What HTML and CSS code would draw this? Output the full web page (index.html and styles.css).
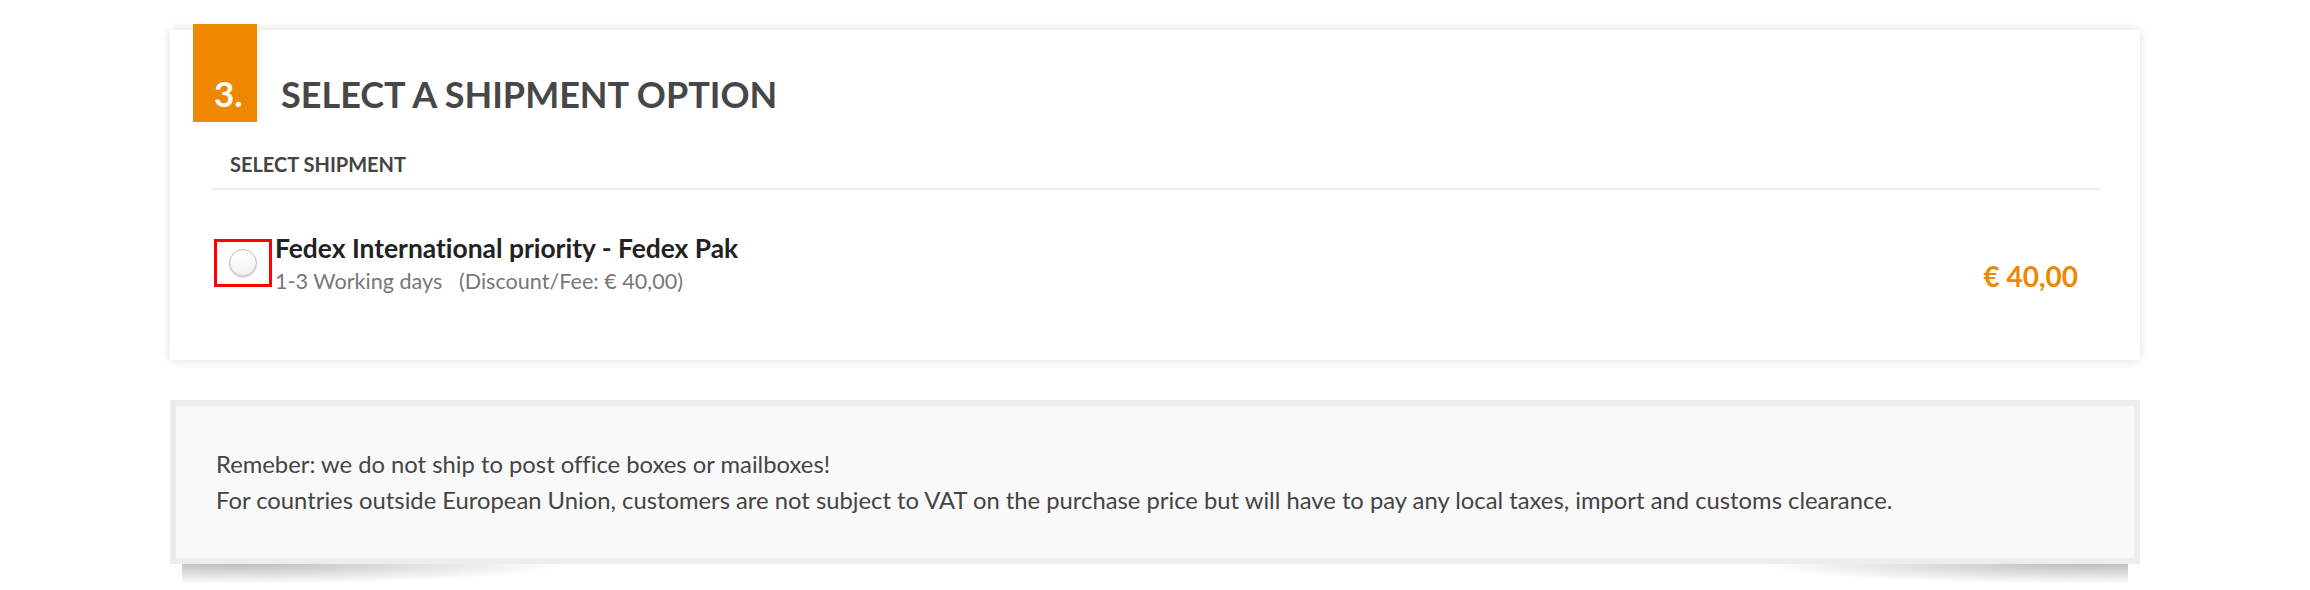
FILE: index.html
```html
<!DOCTYPE html>
<html lang="en">
<head>
  <meta charset="UTF-8">
  <title>Checkout - Shipment</title>
  <link rel="stylesheet" href="styles.css">
</head>
<body>
  <div class="wrap">
    <section class="step-card">
      <header class="step-head">
        <span class="step-num">3.</span>
        <h2 class="step-title">SELECT A SHIPMENT OPTION</h2>
      </header>
      <div class="step-body">
        <div class="list-label">SELECT SHIPMENT</div>
        <label class="ship-option">
          <span class="radio-wrap"><span class="radio"></span></span>
          <span class="ship-info">
            <span class="ship-name">Fedex International priority - Fedex Pak</span>
            <span class="ship-meta">1-3 Working days &nbsp; (Discount/Fee: € 40,00)</span>
          </span>
          <span class="ship-price">€ 40,00</span>
        </label>
      </div>
    </section>

    <div class="notice">
      <p>Remeber: we do not ship to post office boxes or mailboxes!</p>
      <p>For countries outside European Union, customers are not subject to VAT on the purchase price but will have to pay any local taxes, import and customs clearance.</p>
    </div>
    <div class="notice-shadow"></div>
  </div>
</body>
</html>
```

FILE: styles.css
```css
body {
  margin: 0;
  font-family: Lato, 'Liberation Sans', sans-serif;
  font-variant-ligatures: none;
  background: #fff;
  color: #444;
}
.wrap {
  width: 1970px;
  margin: 30px auto 0;
}
.step-card {
  background: #fff;
  box-shadow: 0 0 10px rgba(0, 0, 0, 0.13);
  padding-bottom: 66px;
}
.step-head {
  display: flex;
  align-items: flex-end;
}
.step-num {
  width: 64px;
  height: 98px;
  margin: -6px 0 0 23px;
  padding: 0 0 11px 21px;
  box-sizing: border-box;
  background: #ee8800;
  color: #fff;
  font-size: 35px;
  font-weight: 700;
  line-height: 1;
  display: flex;
  align-items: flex-end;
}
.step-title {
  margin: 0 0 10px 24px;
  font-size: 36px;
  font-weight: 700;
  line-height: 1;
  color: #474747;
}
.step-body {
  padding: 0 40px 0 41px;
}
.list-label {
  padding: 30px 19px 12px;
  font-size: 20px;
  font-weight: 700;
  line-height: 24px;
  color: #444;
  border-bottom: 2px solid #eee;
}
.ship-option {
  display: flex;
  align-items: flex-start;
  margin-top: 43px;
  cursor: pointer;
}
.radio-wrap {
  width: 58px;
  height: 48px;
  margin: 6px 3px 0 3px;
  box-sizing: border-box;
  border: 3px solid #f00;
  display: flex;
  align-items: center;
  justify-content: center;
}
.radio {
  width: 26px;
  height: 26px;
  border-radius: 50%;
  border: 1px solid #bdbdbd;
  background: linear-gradient(#fff, #f3f3f3);
  box-shadow: inset 0 -1px 2px rgba(0, 0, 0, 0.12), 0 1px 1px rgba(0, 0, 0, 0.12);
}
.ship-info {
  display: flex;
  flex-direction: column;
  flex: 1;
}
.ship-name {
  font-size: 26.4px;
  font-weight: 700;
  line-height: 31px;
  color: #222;
}
.ship-meta {
  margin-top: 5px;
  font-size: 21.6px;
  line-height: 24px;
  color: #777;
  white-space: pre-wrap;
}
.ship-price {
  margin: 27px 22px 0 0;
  font-size: 28px;
  font-weight: 700;
  line-height: 1.2;
  color: #ee8800;
}
.notice {
  margin-top: 40px;
  padding: 40px 40px 40px;
  background: #f9f9f9;
  border: 6px solid #ededed;
  font-size: 23.8px;
  line-height: 36px;
  color: #444;
}
.notice p {
  margin: 0;
}
/* lifted corners shadow under the notice */
.notice-shadow {
  height: 22px;
  margin: 0 12px;
  background:
    radial-gradient(ellipse 330px 20px at 55px 0, rgba(0, 0, 0, 0.26), rgba(0, 0, 0, 0)),
    radial-gradient(ellipse 330px 20px at calc(100% - 40px) 0, rgba(0, 0, 0, 0.26), rgba(0, 0, 0, 0));
}
```
